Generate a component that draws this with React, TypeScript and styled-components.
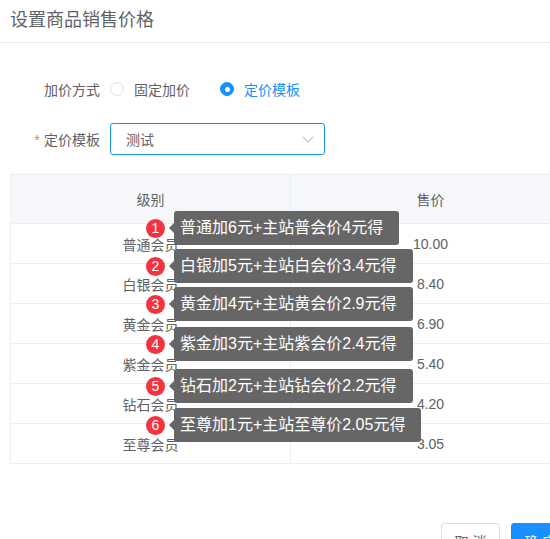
import styled, { createGlobalStyle } from "styled-components";

const GlobalStyle = createGlobalStyle`
  html, body {
    margin: 0;
    padding: 0;
    overflow: hidden;
    background: #fff;
  }
  body {
    font-family: "Liberation Sans", "Noto Sans CJK SC", sans-serif;
    color: #606266;
  }
  * {
    box-sizing: border-box;
  }
`;

const Dialog = styled.div`
  width: 580px;
  background: #fff;
`;

const Header = styled.div`
  height: 43px;
  padding: 0 10px;
  border-bottom: 1px solid #e8eaec;
  display: flex;
  align-items: flex-start;
`;

const Title = styled.h2`
  margin: 0;
  font-size: 18px;
  font-weight: 400;
  line-height: 40px;
  color: #5f6368;
`;

const Body = styled.div`
  padding: 26px 10px 0;
`;

const FormItem = styled.div`
  display: flex;
  align-items: center;
  height: 40px;
  margin-bottom: 10px;
`;

const Label = styled.label<{ $required?: boolean }>`
  width: 90px;
  margin-right: 10px;
  text-align: right;
  font-size: 14px;
  color: #606266;

  &::before {
    content: ${({ $required }) => ($required ? '"*"' : "none")};
    color: #f56c6c;
    margin-right: 4px;
  }
`;

const RadioGroup = styled.div`
  display: flex;
  align-items: center;
  gap: 30px;
`;

const Radio = styled.span<{ $checked?: boolean }>`
  display: flex;
  align-items: center;
  gap: 10px;
  font-size: 14px;
  color: ${({ $checked }) => ($checked ? "#1890ff" : "#606266")};
`;

const RadioCircle = styled.span<{ $checked?: boolean }>`
  width: 14px;
  height: 14px;
  border-radius: 50%;
  border: 1px solid ${({ $checked }) => ($checked ? "#1890ff" : "#dcdfe6")};
  background: ${({ $checked }) => ($checked ? "#1890ff" : "#fff")};
  display: flex;
  align-items: center;
  justify-content: center;

  &::after {
    content: "";
    width: 5px;
    height: 5px;
    border-radius: 50%;
    background: #fff;
    display: ${({ $checked }) => ($checked ? "block" : "none")};
  }
`;

const Select = styled.div`
  width: 215px;
  height: 32px;
  border: 1px solid #1890ff;
  border-radius: 3px;
  padding: 0 10px 0 15px;
  display: flex;
  align-items: center;
  justify-content: space-between;
  font-size: 14px;
  color: #606266;
`;

const Table = styled.div`
  width: 560px;
  margin-top: 15px;
  border-top: 1px solid #ebeef5;
  border-left: 1px solid #ebeef5;
`;

const Row = styled.div<{ $head?: boolean }>`
  display: grid;
  grid-template-columns: 280px 280px;
  height: ${({ $head }) => ($head ? "49px" : "40px")};
  background: ${({ $head }) => ($head ? "#f6f7fb" : "#fff")};
`;

const Cell = styled.div`
  position: relative;
  display: flex;
  align-items: center;
  justify-content: center;
  border-right: 1px solid #ebeef5;
  border-bottom: 1px solid #ebeef5;
  font-size: 14px;
  color: #606266;
`;

const Tip = styled.div`
  position: absolute;
  left: 135px;
  display: flex;
  align-items: center;
  gap: 9px;
  transform: translateY(-50%);
  z-index: 2;
`;

const Badge = styled.span`
  width: 19px;
  height: 19px;
  border-radius: 50%;
  background: #f5333f;
  color: #fff;
  font-size: 14px;
  display: flex;
  align-items: center;
  justify-content: center;
`;

const Bubble = styled.div`
  position: relative;
  height: 34px;
  padding: 0 16px 0 6px;
  border-radius: 3px;
  background: #666;
  color: #fff;
  font-size: 16px;
  line-height: 34px;
  white-space: nowrap;

  &::before {
    content: "";
    position: absolute;
    left: -5px;
    top: 50%;
    margin-top: -5px;
    border-top: 5px solid transparent;
    border-bottom: 5px solid transparent;
    border-right: 5px solid #666;
  }
`;

const Footer = styled.div`
  display: flex;
  justify-content: flex-end;
  gap: 11px;
  padding: 59px 10px 0;
`;

const Button = styled.button<{ $primary?: boolean }>`
  width: 59px;
  height: 36px;
  padding: 0;
  border-radius: 3px;
  border: 1px solid ${({ $primary }) => ($primary ? "#1890ff" : "#dcdfe6")};
  background: ${({ $primary }) => ($primary ? "#1890ff" : "#fff")};
  color: ${({ $primary }) => ($primary ? "#fff" : "#606266")};
  font-family: inherit;
  font-size: 14px;
`;

const levels = [
  { name: "普通会员", price: "10.00", tip: "普通加6元+主站普会价4元得", y: 4 },
  { name: "白银会员", price: "8.40", tip: "白银加5元+主站白会价3.4元得", y: 2 },
  { name: "黄金会员", price: "6.90", tip: "黄金加4元+主站黄会价2.9元得", y: 0 },
  { name: "紫金会员", price: "5.40", tip: "紫金加3元+主站紫会价2.4元得", y: 0 },
  { name: "钻石会员", price: "4.20", tip: "钻石加2元+主站钻会价2.2元得", y: 2 },
  { name: "至尊会员", price: "3.05", tip: "至尊加1元+主站至尊价2.05元得", y: 1 },
];

const Chevron = () => (
  <svg width="12" height="7" viewBox="0 0 12 7" fill="none">
    <path d="M1 1l5 5 5-5" stroke="#c0c4cc" strokeWidth="1.2" />
  </svg>
);

const App = () => {
  return (
    <Dialog>
      <GlobalStyle />
      <Header>
        <Title>设置商品销售价格</Title>
      </Header>
      <Body>
        <FormItem>
          <Label>加价方式</Label>
          <RadioGroup>
            <Radio>
              <RadioCircle />
              固定加价
            </Radio>
            <Radio $checked>
              <RadioCircle $checked />
              定价模板
            </Radio>
          </RadioGroup>
        </FormItem>
        <FormItem>
          <Label $required>定价模板</Label>
          <Select>
            测试
            <Chevron />
          </Select>
        </FormItem>
        <Table>
          <Row $head>
            <Cell>级别</Cell>
            <Cell>售价</Cell>
          </Row>
          {levels.map((level, i) => (
            <Row key={level.name}>
              <Cell>
                {level.name}
                <Tip style={{ top: level.y }}>
                  <Badge>{i + 1}</Badge>
                  <Bubble>{level.tip}</Bubble>
                </Tip>
              </Cell>
              <Cell>{level.price}</Cell>
            </Row>
          ))}
        </Table>
      </Body>
      <Footer>
        <Button>取 消</Button>
        <Button $primary>确 定</Button>
      </Footer>
    </Dialog>
  );
};

export default App;
